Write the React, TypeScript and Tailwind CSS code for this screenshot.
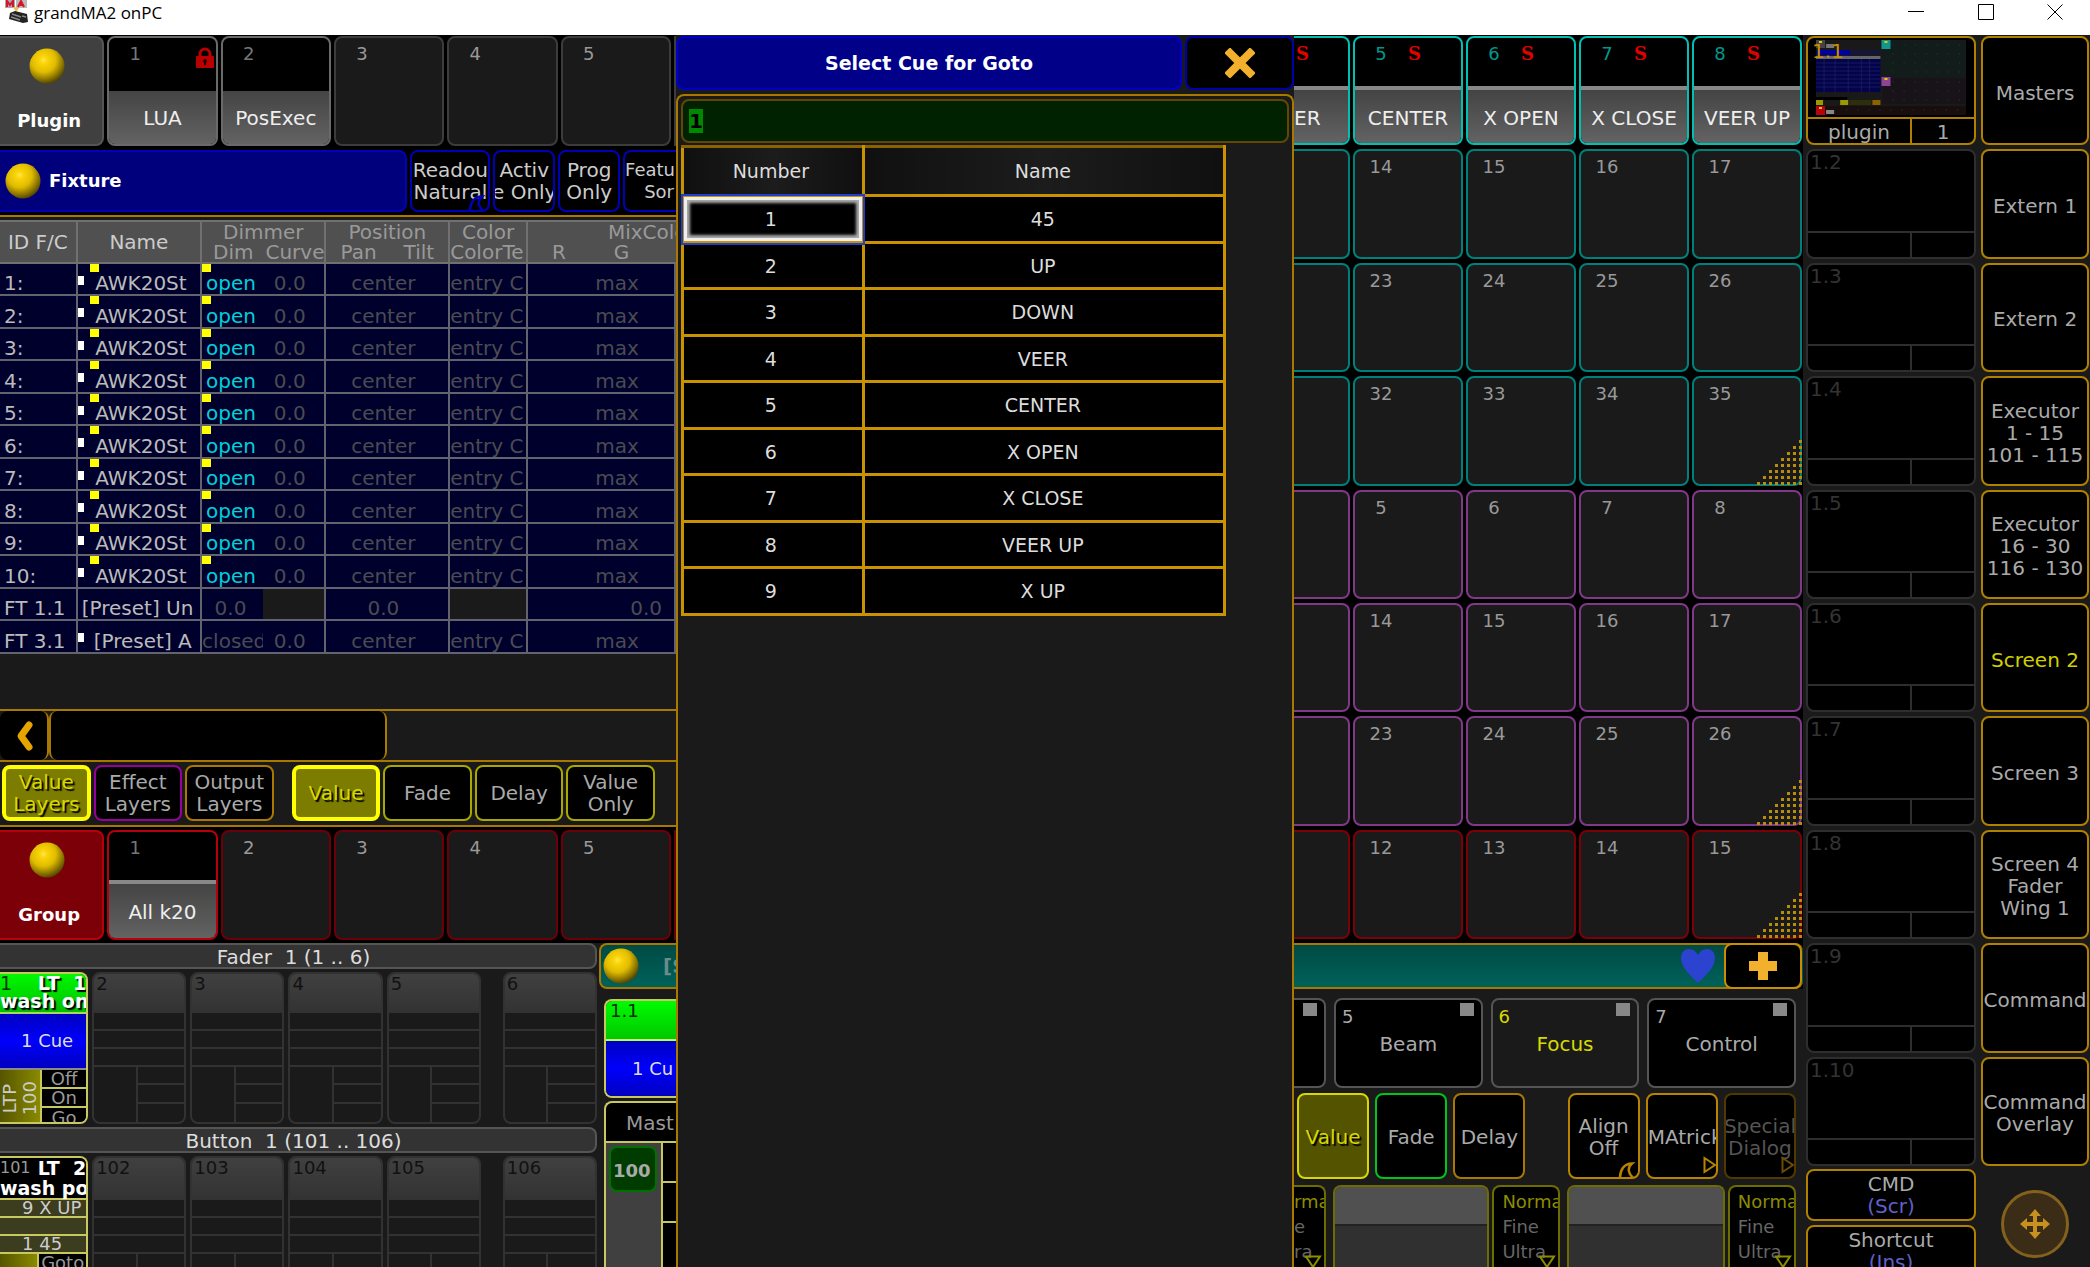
import { useEffect, useRef, type ReactNode } from "react";
import clsx from "clsx";

const fixtures = [1, 2, 3, 4, 5, 6, 7, 8, 9, 10];
const cues = ["45", "UP", "DOWN", "VEER", "CENTER", "X OPEN", "X CLOSE", "VEER UP", "X UP"];

const Ball = ({ id }: { id: string }) => (
  <svg viewBox="0 0 36 36" className="h-9 w-9 shrink-0" aria-hidden="true">
    <defs>
      <radialGradient id={id} cx="0.4" cy="0.33" r="0.7">
        <stop offset="0" stopColor="#ffe45c" />
        <stop offset="0.15" stopColor="#fbd508" />
        <stop offset="0.5" stopColor="#e0bc00" />
        <stop offset="0.8" stopColor="#8a7300" />
        <stop offset="1" stopColor="#4c4000" />
      </radialGradient>
    </defs>
    <circle cx="18" cy="18" r="17.5" fill={`url(#${id})`} />
  </svg>
);

const Lock = () => (
  <svg viewBox="0 0 18 22" className="absolute top-[9px] right-0.5 h-[22px] w-[18px]" aria-hidden="true">
    <path d="M4 11V7a5 5 0 0 1 10 0v4" fill="none" stroke="#b80000" strokeWidth="3" />
    <rect y="9" width="18" height="12" rx="1" fill="#b80000" />
    <path d="M9 12a2 2 0 0 1 1 3.6V18H8v-2.400A2 2 0 0 1 9 12" fill="#1a0000" />
  </svg>
);

/** Diagonal dotted corner that marks a scrollable pool */
const DotCorner = () => (
  <svg viewBox="0 0 47 48" className="absolute -right-[3px] -bottom-[3px] z-10 h-12 w-[47px]" aria-hidden="true">
    {Array.from({ length: 8 }, (_, r) =>
      Array.from({ length: r + 1 }, (_, c) => (
        <rect key={`${r}-${c}`} x={43 - c * 6} y={1 + r * 6} width="3" height="3" fill="#b98c0c" />
      ))
    )}
  </svg>
);

const Swirl = ({ color }: { color: string }) => (
  <svg viewBox="0 0 20 16" className="absolute right-0 -bottom-px h-4 w-5" aria-hidden="true">
    <path d="M2 16C2 8 6 1.500 14 1.500c-5 4-4 11 2 14.500" fill="none" stroke={color} strokeWidth="2.500" />
  </svg>
);

const Triangle = ({ color }: { color: string }) => (
  <svg viewBox="0 0 13 18" className="absolute right-0 bottom-[3px] h-[18px] w-[13px]" aria-hidden="true">
    <path d="M1.500 2v14L12 9z" fill="none" stroke={color} strokeWidth="2" />
  </svg>
);

type PoolTileProps = {
  no?: string;
  label?: string;
  tone: string;
  strip?: boolean;
  star?: boolean;
  numTone?: string;
  children?: ReactNode;
};

const PoolTile = ({ no, label, tone, strip, star, numTone = "text-[#999]", children }: PoolTileProps) => (
  <button className={clsx("relative flex min-w-0 flex-col rounded-lg border-2 text-left", label ? "bg-black" : "bg-[#1a1a1a]", tone)}>
    <span
      className={clsx(
        "flex w-full justify-between overflow-hidden pt-[5px] text-lg/[22px]",
        !label && "flex-1",
        label && (strip ? "h-12 shrink-0" : "h-[53px] shrink-0")
      )}
    >
      <span className={clsx("w-[52px] text-center", numTone)}>{no}</span>
      {star && <span className="w-1/2 font-['DejaVu_Serif',serif] font-bold text-[#e00000]">S</span>}
    </span>
    {label && (
      <span
        className={clsx(
          "flex w-full flex-1 items-center justify-center overflow-hidden rounded-b-md bg-linear-to-b from-[#444] to-[#636363] text-xl/[22px] whitespace-nowrap text-[#eee]",
          strip && "border-t-4 border-[#888] pt-0.5"
        )}
      >
        {label}
      </span>
    )}
    {children}
  </button>
);

const PluginRow = () => (
  <div className="grid h-[110px] grid-cols-[104fr_110fr_110fr_110fr_110fr_110fr_2fr] gap-[3px]">
    <button className="flex flex-col items-center justify-between rounded-r-lg border-2 border-l-0 border-[#555] bg-[#404040] pt-2.5 pr-2 pb-3 text-lg/[22px] font-bold text-white">
      <Ball id="ball-plugin" />
      <span className="pl-1">Plugin</span>
    </button>
    <PoolTile no="1" label="LUA" tone="border-[#6a6a6a]" numTone="text-[#777]">
      <Lock />
    </PoolTile>
    <PoolTile no="2" label="PosExec" tone="border-[#6a6a6a]" numTone="text-[#777]" />
    <PoolTile no="3" tone="border-[#3c3c3c]" />
    <PoolTile no="4" tone="border-[#3c3c3c]" />
    <PoolTile no="5" tone="border-[#3c3c3c]" />
    <span className="border-2 border-r-0 border-[#3c3c3c]" />
  </div>
);

const GroupRow = () => (
  <div className="grid h-[110px] grid-cols-[104fr_110fr_110fr_110fr_110fr_110fr_2fr] gap-[3px]">
    <button className="flex flex-col items-center justify-between rounded-r-lg border-2 border-l-0 border-[#b8000c] bg-[#7c0008] pt-2.5 pr-2 pb-3 text-lg/[22px] font-bold text-white">
      <Ball id="ball-group" />
      <span className="pl-1">Group</span>
    </button>
    <PoolTile no="1" label="All k20" strip tone="border-[#b8000c]" numTone="text-[#777]" />
    <PoolTile no="2" tone="border-[#6c0008]" />
    <PoolTile no="3" tone="border-[#6c0008]" />
    <PoolTile no="4" tone="border-[#6c0008]" />
    <PoolTile no="5" tone="border-[#6c0008]" />
    <span className="border-2 border-r-0 border-[#6c0008]" />
  </div>
);

const HeadButton = ({ lines, children }: { lines: string[]; children?: ReactNode }) => (
  <button className="relative flex min-w-0 flex-col items-center justify-center overflow-hidden rounded-lg border-2 border-[#0000b4] bg-black text-xl/[22px] whitespace-nowrap text-[#ccc]">
    {lines.map((l) => (
      <span key={l}>{l}</span>
    ))}
    {children}
  </button>
);

const FixtureBar = () => (
  <div className="mt-1 grid h-[62px] grid-cols-[408fr_80fr_62fr_62fr_53fr] gap-[3px]">
    <h2 className="flex items-center gap-2 rounded-r-lg border-2 border-l-0 border-[#0000b4] bg-[#00007c] pl-[5px] text-lg font-bold text-white">
      <Ball id="ball-fixture" />
      Fixture
    </h2>
    <HeadButton lines={["Readou", "Natural"]}>
      <Swirl color="#0000b4" />
    </HeadButton>
    <HeadButton lines={["Activ", "e Only"]} />
    <HeadButton lines={["Prog", "Only"]} />
    <button className="min-w-0 overflow-hidden rounded-l-lg border-2 border-r-0 border-[#0000b4] bg-black text-right text-lg/[22px] text-[#ccc]">
      <span className="block text-left">Featu</span>
      <span className="block pr-0.5">Sor</span>
    </button>
  </div>
);

const cell = "border-r-2 border-b-2 border-[#63636d] p-0 pt-2 overflow-hidden whitespace-nowrap";
const dim = "text-center text-[#4b4b52]";

const FixtureSheet = () => (
  <table className="mt-[3px] w-full table-fixed border-separate border-spacing-0 bg-[#00002c] text-xl/[22px] text-[#bbb]">
    <colgroup>
      <col className="w-[11.5%]" />
      <col className="w-[18.4%]" />
      <col className="w-[9%]" />
      <col className="w-[9.4%]" />
      <col className="w-[18.3%]" />
      <col className="w-[11.5%]" />
      <col />
    </colgroup>
    <thead className="bg-[#505050] text-[#999]">
      <tr className="h-[43px]">
        <th className="border-t-2 border-r-2 border-b-2 border-[#707070] p-0 font-normal text-[#ccc]">ID F/C</th>
        <th className="border-t-2 border-r-2 border-b-2 border-[#707070] p-0 font-normal text-[#ccc]">Name</th>
        <th colSpan={2} className="border-t-2 border-r-2 border-b-2 border-[#707070] p-0 font-normal leading-5">
          Dimmer
          <span className="flex justify-end gap-3">
            <span>Dim</span>
            <span>Curve</span>
          </span>
        </th>
        <th className="border-t-2 border-r-2 border-b-2 border-[#707070] p-0 font-normal leading-5">
          Position
          <span className="flex justify-between px-3.5">
            <span>Pan</span>
            <span>Tilt</span>
          </span>
        </th>
        <th className="overflow-hidden border-t-2 border-r-2 border-b-2 border-[#707070] p-0 font-normal leading-5">
          Color
          <span className="flex">ColorTe</span>
        </th>
        <th className="overflow-hidden border-t-2 border-b-2 border-[#707070] p-0 text-left font-normal leading-5 whitespace-nowrap">
          <span className="block pl-20">MixColo</span>
          <span className="flex gap-12 pl-6">
            <span>R</span>
            <span>G</span>
          </span>
        </th>
      </tr>
    </thead>
    <tbody>
      {fixtures.map((n) => (
        <tr key={n} className={n % 2 ? "h-8" : "h-[33px]"}>
          <td className={clsx(cell, "pl-1")}>{n}:</td>
          <td className={clsx(cell, "relative text-center")}>
            <span className="absolute top-0 left-3 h-2 w-[9px] bg-[#ff0]" />
            <span className="absolute top-3 left-0 h-[9px] w-1.5 bg-white" />
            <span className="pl-1">AWK20St</span>
          </td>
          <td className={clsx(cell, "relative border-r-0! pl-1 text-[#00d0d8]")}>
            <span className="absolute top-0 left-0 h-2 w-[9px] bg-[#ff0]" />
            open
          </td>
          <td className={clsx(cell, dim, "pr-2")}>0.0</td>
          <td className={clsx(cell, dim, "pr-2")}>center</td>
          <td className={clsx(cell, dim, "text-left")}>entry C</td>
          <td className={clsx(cell, dim, "pl-8")}>max</td>
        </tr>
      ))}
      <tr className="h-8">
        <td className={clsx(cell, "pl-1")}>FT 1.1</td>
        <td className={clsx(cell, "pl-1")}>[Preset] Un</td>
        <td className={clsx(cell, dim, "border-r-0! pr-1")}>0.0</td>
        <td className={clsx(cell, "bg-[#1a1a1a]")} />
        <td className={clsx(cell, dim, "pr-2")}>0.0</td>
        <td className={clsx(cell, "bg-[#1a1a1a]")} />
        <td className={clsx(cell, "pr-3 text-right text-[#4b4b52]")}>0.0</td>
      </tr>
      <tr className="h-[33px]">
        <td className={clsx(cell, "pl-1")}>FT 3.1</td>
        <td className={clsx(cell, "relative pl-4")}>
          <span className="absolute top-3 left-0 h-[9px] w-1.5 bg-white" />
          [Preset] A
        </td>
        <td className={clsx(cell, "border-r-0! text-[#4b4b52]")}>closed</td>
        <td className={clsx(cell, dim, "pr-2")}>0.0</td>
        <td className={clsx(cell, dim, "pr-2")}>center</td>
        <td className={clsx(cell, dim, "text-left")}>entry C</td>
        <td className={clsx(cell, dim, "pl-8")}>max</td>
      </tr>
    </tbody>
  </table>
);

const layerButtons = [
  { text: ["Value", "Layers"], tone: "border-[#ff0] border-4 bg-[#7c7c00] text-[#d8d800] [text-shadow:2px_2px_1px_#000]" },
  { text: ["Effect", "Layers"], tone: "border-2 border-[#98009c] bg-black text-[#aaa]" },
  { text: ["Output", "Layers"], tone: "border-2 border-[#a87800] bg-black text-[#aaa]" },
  null,
  { text: ["Value"], tone: "border-[#ff0] border-4 bg-[#7c7c00] text-[#d8d800] [text-shadow:2px_2px_1px_#000]" },
  { text: ["Fade"], tone: "border-2 border-[#a8a800] bg-black text-[#aaa]" },
  { text: ["Delay"], tone: "border-2 border-[#a8a800] bg-black text-[#aaa]" },
  { text: ["Value", "Only"], tone: "border-2 border-[#a8a800] bg-black text-[#aaa]" },
];

const LayerBar = () => (
  <div className="grid h-[65px] grid-cols-[88fr_88fr_88fr_12fr_88fr_88fr_88fr_88fr_18fr] gap-[3px] border-b-2 border-[#a87800] bg-[#1a1a1a] pt-[3px] pb-1 pl-0.5">
    {layerButtons.map((b, i) =>
      b ? (
        <button key={i} className={clsx("flex min-w-0 flex-col items-center justify-center rounded-lg text-xl/[22px]", b.tone)}>
          {b.text.map((t) => (
            <span key={t}>{t}</span>
          ))}
        </button>
      ) : (
        <span key={i} />
      )
    )}
  </div>
);

const EmptyExec = ({ no, tall }: { no: string; tall?: boolean }) => (
  <div className="flex min-w-0 flex-col overflow-hidden rounded-lg border-2 border-[#323232] bg-[#1a1a1a]">
    <span
      className={clsx(
        "shrink-0 border-b-2 border-[#323232] bg-linear-to-b from-[#404040] to-[#333] pl-0.5 text-lg/[20px] text-[#111]",
        tall ? "h-[42px]" : "h-[39px]"
      )}
    >
      {no}
    </span>
    <span className="h-[18px] shrink-0 border-b-2 border-[#323232]" />
    <span className="h-[18px] shrink-0 border-b-2 border-[#323232]" />
    <span className="h-[18px] shrink-0 border-b-2 border-[#323232]" />
    <span className="grid flex-1 grid-cols-[45fr_48fr]">
      <span className="border-r-2 border-[#323232]" />
      <span className="grid grid-rows-3 divide-y-2 divide-[#323232]">
        <span />
        <span />
        <span />
      </span>
    </span>
  </div>
);

const execGrid = "grid grid-cols-[88fr_94fr_94fr_94fr_94fr_14fr_94fr] gap-x-1";
const actionBtn = "border-b-2 border-[#c8c860] bg-black text-center text-lg/[17px] text-[#999] last:border-b-0";

const Executors = () => (
  <div className="flex min-w-0 flex-col bg-[#1a1a1a]">
    <h3 className="h-[26px] rounded-r-lg border-2 border-l-0 border-[#555] bg-[#333] pr-2 text-center text-xl/[24px] whitespace-pre text-[#ddd]">
      Fader  1 (1 .. 6)
    </h3>
    <div className={clsx(execGrid, "mt-[3px] h-[152px]")}>
      <div className="flex min-w-0 flex-col overflow-hidden rounded-r-lg border-2 border-l-0 border-[#c8c860]">
        <div className="relative h-10 shrink-0 border-b-2 border-[#a8d860] bg-linear-to-b from-[#00f800] to-[#00c000] text-right text-[19px]/[18px] font-bold whitespace-pre text-white [text-shadow:2px_2px_1px_#000]">
          <span className="absolute top-0 left-0 font-normal text-[#063806] [text-shadow:none]">1</span>
          LT  1{"\n"}wash on
        </div>
        <div className="flex h-14 shrink-0 items-center justify-center border-b-2 border-[#8a8a8a] bg-linear-to-b from-[#0000c0] via-[#0000fc] to-[#0000c0] pl-2 text-lg text-[#ddd]">
          1 Cue
        </div>
        <div className="grid flex-1 grid-cols-[40fr_48fr]">
          <div className="flex items-center justify-center border-r-2 border-[#c8c860] bg-linear-to-r from-[#555500] to-[#8a8a00]">
            <span className="rotate-180 text-center text-lg/[20px] text-[#ccc] [writing-mode:vertical-rl]">
              LTP
              <br />
              100
            </span>
          </div>
          <div className="grid grid-rows-3">
            <button className={actionBtn}>Off</button>
            <button className={actionBtn}>On</button>
            <button className={actionBtn}>Go</button>
          </div>
        </div>
      </div>
      <EmptyExec no="2" />
      <EmptyExec no="3" />
      <EmptyExec no="4" />
      <EmptyExec no="5" />
      <span />
      <EmptyExec no="6" />
    </div>
    <h3 className="mt-[3px] h-[26px] rounded-r-lg border-2 border-l-0 border-[#555] bg-[#333] pr-2 text-center text-xl/[24px] whitespace-pre text-[#ddd]">
      Button  1 (101 .. 106)
    </h3>
    <div className={clsx(execGrid, "mt-[3px] h-[152px] shrink-0")}>
      <div className="flex min-w-0 flex-col overflow-hidden rounded-r-lg border-2 border-l-0 border-[#c8c860]">
        <div className="relative h-10 shrink-0 bg-black text-[19px]/[20px] font-bold whitespace-pre text-white">
          <span className="absolute top-0 left-0 text-base/[20px] font-normal text-[#999]">101</span>
          <span className="block text-right">LT  2</span>wash pos
        </div>
        <span className="h-5 shrink-0 border-y-2 border-[#c8c860] bg-[#3c3c1e] pl-[22px] text-lg/[16px] whitespace-nowrap text-[#ccc]">9 X UP</span>
        <span className="h-[18px] shrink-0 border-b-2 border-[#c8c860] bg-[#3c3c1e]" />
        <span className="h-[18px] shrink-0 border-b-2 border-[#c8c860] bg-[#3c3c1e] pl-[22px] text-lg/[16px] text-[#ccc]">1 45</span>
        <div className="grid flex-1 grid-cols-[40fr_48fr]">
          <span className="border-r-2 border-[#c8c860] bg-linear-to-r from-[#555500] to-[#8a8a00]" />
          <button className="overflow-hidden bg-black text-center text-lg/[17px] text-[#999]">
            <span className="block h-14">Goto</span>
          </button>
        </div>
      </div>
      <EmptyExec no="102" tall />
      <EmptyExec no="103" tall />
      <EmptyExec no="104" tall />
      <EmptyExec no="105" tall />
      <span />
      <EmptyExec no="106" tall />
    </div>
  </div>
);

const SpecialMaster = () => (
  <div className="flex min-w-0 flex-col overflow-hidden bg-[#1a1a1a] whitespace-nowrap">
    <div className="flex h-[46px] shrink-0 items-center gap-6 rounded-l-lg border-2 border-r-0 border-[#a87800] bg-linear-to-b from-[#004a44] to-[#00625a] pl-0.5 text-xl font-bold text-[#6c8c8a]">
      <Ball id="ball-master" />
      [S
    </div>
    <div className="mt-2.5 ml-[5px] flex h-[99px] shrink-0 flex-col overflow-hidden rounded-l-lg border-2 border-r-0 border-[#c8c860]">
      <span className="h-10 border-b-2 border-[#c8f860] bg-linear-to-b from-[#00fc00] to-[#00c800] pl-1 text-lg/[20px] text-[#042c04]">1.1</span>
      <span className="flex flex-1 items-center bg-linear-to-b from-[#0000c0] via-[#0000fc] to-[#0000c0] pl-[26px] text-lg text-[#ddd]">1 Cu</span>
    </div>
    <div className="mt-[3px] ml-[5px] flex flex-1 flex-col overflow-hidden rounded-l-lg border-2 border-r-0 border-[#c8c860] bg-black">
      <span className="h-10 shrink-0 border-b-2 border-[#c8c860] pl-5 text-xl/[40px] text-[#999]">Mast</span>
      <div className="grid flex-1 grid-cols-[57fr_13fr]">
        <div className="border-r-2 border-[#c8c860] bg-[#404040] p-[3px] pr-1">
          <div className="h-[46px] rounded-lg border-2 border-[#007000] bg-[#003c00] pl-0.5 text-lg/[46px] font-bold text-[#aaa]">100</div>
        </div>
        <div>
          <div className="h-10 border-b-2 border-[#c8c860]" />
          <div className="h-10 border-b-2 border-[#c8c860]" />
        </div>
      </div>
    </div>
  </div>
);

const LeftPane = () => (
  <section className="flex min-w-0 flex-col overflow-hidden pt-px">
    <PluginRow />
    <FixtureBar />
    <div className="mt-[3px] flex flex-col border-t-2 border-[#a87800] bg-[#1a1a1a]">
      <FixtureSheet />
      <div className="mt-[55px] flex h-[53px] border-y-2 border-[#a87800]">
        <button aria-label="Back" className="flex w-[49px] items-center justify-center rounded-lg border-r-2 border-[#a87800] bg-black">
          <svg viewBox="0 0 20 32" className="h-8 w-5" aria-hidden="true">
            <path d="M15 5 7 16l8 11" fill="none" stroke="#e6a400" strokeWidth="7" strokeLinecap="round" strokeLinejoin="round" />
          </svg>
        </button>
        <span className="w-1/2 rounded-lg border-x-2 border-[#a87800] bg-black" />
      </div>
      <LayerBar />
    </div>
    <div className="mt-[3px]">
      <GroupRow />
    </div>
    <div className="mt-[3px] grid min-h-0 flex-1 grid-cols-[597fr_77fr] gap-0.5 bg-[#1a1a1a]">
      <Executors />
      <SpecialMaster />
    </div>
  </section>
);

const GotoDialog = () => {
  const input = useRef<HTMLInputElement>(null);

  useEffect(() => {
    input.current?.focus();
    input.current?.select();
  }, []);

  return (
    <section role="dialog" aria-label="Select Cue for Goto" className="flex min-w-0 flex-col bg-[#1a1a1a] pt-px text-[19px]/[24px] text-[#ddd]">
      <div className="grid h-[54px] grid-cols-[506fr_109fr] gap-[3px]">
        <h1 className="flex items-center justify-center rounded-lg border-2 border-[#0000c4] bg-[#000088] font-bold text-white">Select Cue for Goto</h1>
        <button aria-label="Close" className="flex items-center justify-center rounded-lg border-2 border-[#0000a8] bg-black">
          <svg viewBox="0 0 30 30" className="h-[30px] w-[30px]" aria-hidden="true">
            <path d="M5 5l20 20M25 5 5 25" fill="none" stroke="#f2b02c" strokeWidth="8" strokeLinecap="square" />
          </svg>
        </button>
      </div>
      <div className="mt-1 flex min-h-0 flex-1 flex-col rounded-t-lg border-2 border-b-0 border-[#a87800] px-[3px] pt-[3px]">
        <input
          ref={input}
          aria-label="Cue number"
          defaultValue="1"
          className="h-11 rounded-lg border-2 border-[#644600] bg-[#002200] px-1.5 text-xl/[30px] font-bold text-[#ddd] outline-none selection:bg-[#008800] selection:text-black"
        />
        <table className="mt-0.5 w-[545px] max-w-full table-fixed border-collapse bg-black">
          <colgroup>
            <col className="w-1/3" />
            <col />
          </colgroup>
          <thead>
            <tr className="h-[49px] bg-[#1a1a1a]">
              <th className="border-[3px] border-t-[#8a6200] border-[#c89200] bg-linear-to-r from-[#101010] via-[#1c1c1c] to-[#101010] p-0 pr-1 font-normal">
                Number
              </th>
              <th className="border-[3px] border-t-[#8a6200] border-[#c89200] bg-linear-to-r from-[#101010] via-[#1c1c1c] to-[#101010] p-0 pr-0.5 font-normal">
                Name
              </th>
            </tr>
          </thead>
          <tbody>
            {cues.map((name, i) => (
              <tr key={name} className={i % 2 ? "h-[46px]" : "h-[47px]"}>
                <td
                  className={clsx(
                    "border-[3px] border-[#c89200] p-0 pr-1 text-center",
                    i === 0 && "outline-2 outline-[#2040c8] shadow-[inset_0_0_0_3px_#eee,inset_0_0_3px_6px_#aaa]"
                  )}
                >
                  {i + 1}
                </td>
                <td className="border-[3px] border-[#c89200] p-0 pr-0.5 text-center">{name}</td>
              </tr>
            ))}
          </tbody>
        </table>
      </div>
    </section>
  );
};

const activePresets = [
  ["5", "CENTER"],
  ["6", "X OPEN"],
  ["7", "X CLOSE"],
  ["8", "VEER UP"],
];

const poolRows = [
  { nos: ["14", "15", "16", "17"], tone: "border-[#00807a]", dots: false },
  { nos: ["23", "24", "25", "26"], tone: "border-[#00807a]", dots: false },
  { nos: ["32", "33", "34", "35"], tone: "border-[#00807a]", dots: true },
  { nos: ["5", "6", "7", "8"], tone: "border-[#803888]", dots: false },
  { nos: ["14", "15", "16", "17"], tone: "border-[#803888]", dots: false },
  { nos: ["23", "24", "25", "26"], tone: "border-[#803888]", dots: true },
  { nos: ["12", "13", "14", "15"], tone: "border-[#7c0008]", dots: true },
];

const poolCols = "grid grid-cols-[56fr_110fr_110fr_110fr_110fr] gap-[3px] pr-px";

const Pools = () => (
  <div className="grid h-[903px] shrink-0 grid-rows-8 gap-1">
    <div className={poolCols}>
      <div className="flex min-w-0 flex-col overflow-hidden rounded-r-lg border-2 border-l-0 border-[#00c0b4] bg-black">
        <span className="h-12 shrink-0 pt-[5px] pl-0.5 font-['DejaVu_Serif',serif] text-lg/[22px] font-bold text-[#e00000]">S</span>
        <span className="flex flex-1 items-center border-t-4 border-[#888] bg-linear-to-b from-[#444] to-[#636363] pt-0.5 text-xl/[22px] text-[#eee]">ER</span>
      </div>
      {activePresets.map(([no, label]) => (
        <PoolTile key={no} no={no} label={label} strip star tone="border-[#00c0b4]" numTone="text-[#00988e]" />
      ))}
    </div>
    {poolRows.map((row, r) => (
      <div key={r} className={poolCols}>
        <span className={clsx("rounded-r-lg border-2 border-l-0 bg-[#1a1a1a]", row.tone)} />
        {row.nos.map((no, i) => (
          <PoolTile key={no} no={no} tone={row.tone}>
            {row.dots && i === 3 && <DotCorner />}
          </PoolTile>
        ))}
      </div>
    ))}
  </div>
);

const FeatureTile = ({ no, label, active }: { no: string; label: string; active?: boolean }) => (
  <button
    className={clsx(
      "relative min-w-0 rounded-lg border-2 border-[#555] pt-0.5 text-xl/[22px]",
      active ? "bg-[#1a1a1a] text-[#d8d800]" : "bg-black text-[#aaa]"
    )}
  >
    <span className="absolute top-1.5 left-1.5 text-lg/[22px]">{no}</span>
    <span className="absolute top-[3px] right-[7px] h-[13px] w-3.5 bg-[#888]" />
    {label}
  </button>
);

const CtrlButton = ({ lines, tone, children }: { lines: string[]; tone: string; children?: ReactNode }) => (
  <button className={clsx("relative flex min-w-0 flex-col justify-center overflow-hidden rounded-lg border-2 pt-0.5 text-xl/[22px] whitespace-nowrap", tone)}>
    {lines.map((l) => (
      <span key={l}>{l}</span>
    ))}
    {children}
  </button>
);

const EncoderMode = ({ partial }: { partial?: boolean }) => (
  <button
    className={clsx(
      "relative flex min-w-0 flex-col overflow-hidden border-2 border-b-0 border-[#6c6c00] bg-black pt-0.5 text-left text-lg/[25px] text-[#666]",
      partial ? "rounded-tr-lg border-l-0" : "rounded-t-lg pl-2"
    )}
  >
    <span className="text-[#8c8c00]">{partial ? "rma" : "Norma"}</span>
    <span>{partial ? "e" : "Fine"}</span>
    <span>{partial ? "ra" : "Ultra"}</span>
    <svg viewBox="0 0 18 12" className="absolute right-0.5 bottom-0 h-3 w-[18px]" aria-hidden="true">
      <path d="M2 1.500h14L9 12z" fill="none" stroke="#8c8c00" strokeWidth="2" />
    </svg>
  </button>
);

const EncoderBar = () => (
  <div className="flex min-h-0 flex-1 flex-col bg-[#1a1a1a] pr-[7px]">
    <div className="grid h-[90px] shrink-0 grid-cols-[32fr_149fr_149fr_149fr] gap-2">
      <button aria-label="Color" className="relative rounded-r-lg border-2 border-l-0 border-[#555] bg-black">
        <span className="absolute top-[3px] right-[7px] h-[13px] w-3.5 bg-[#888]" />
      </button>
      <FeatureTile no="5" label="Beam" />
      <FeatureTile no="6" label="Focus" active />
      <FeatureTile no="7" label="Control" />
    </div>
    <div className="mt-[5px] grid h-[86px] shrink-0 grid-cols-[72fr_72fr_72fr_30fr_72fr_72fr_72fr] gap-1.5 pl-[3px]">
      <CtrlButton lines={["Value"]} tone="items-center border-[#d8d800] bg-[#545400] text-[#d8d800] [text-shadow:2px_2px_1px_#000]" />
      <CtrlButton lines={["Fade"]} tone="items-center border-[#00c418] bg-black text-[#aaa]" />
      <CtrlButton lines={["Delay"]} tone="items-center border-[#a87800] bg-black text-[#aaa]" />
      <span />
      <CtrlButton lines={["Align", "Off"]} tone="items-center border-[#b88400] bg-black text-[#aaa]">
        <Swirl color="#b88400" />
      </CtrlButton>
      <CtrlButton lines={["MAtricks"]} tone="items-start border-[#b88400] bg-black text-[#aaa]">
        <Triangle color="#b88400" />
      </CtrlButton>
      <CtrlButton lines={["Special", "Dialog"]} tone="items-center border-[#503800] bg-black text-[#555]">
        <Triangle color="#6c4c00" />
      </CtrlButton>
    </div>
    <div className="mt-1.5 grid min-h-0 flex-1 grid-cols-[32fr_166fr_67fr_168fr_68fr]">
      <EncoderMode partial />
      {[0, 1].map((k) => (
        <div key={k} className="contents">
          <div className="mr-[3px] ml-[7px] rounded-t-lg border-2 border-b-0 border-[#6c6c00] bg-[#303030]">
            <div className="h-[39px] rounded-t-md border-b-2 border-[#222] bg-[#505050]" />
          </div>
          <EncoderMode />
        </div>
      ))}
    </div>
  </div>
);

const CenterPane = () => (
  <section className="flex min-w-0 flex-col overflow-hidden bg-black pt-px">
    <Pools />
    <div className="mt-1 flex h-[46px] shrink-0 items-stretch rounded-r-lg border-y-2 border-[#a87800] bg-linear-to-b from-[#004a44] to-[#00625a]">
      <div className="flex flex-1 items-center justify-end pr-2">
        <svg viewBox="0 0 36 36" className="h-9 w-9" aria-label="Favourite">
          <path d="M18 35C12 29 1 20 1 10 1 4 5 1 9 1c4 0 7 2 9 6 2-4 5-6 9-6 4 0 8 3 8 9 0 10-11 19-17 25z" fill="#2b43cf" />
        </svg>
      </div>
      <button aria-label="Add" className="-my-0.5 mr-px flex w-[78px] items-center justify-center rounded-lg border-2 border-[#c89000] bg-black">
        <svg viewBox="0 0 30 30" className="h-[30px] w-[30px]" aria-hidden="true">
          <path d="M10 1h10v9h9v10h-9v9H10v-9H1V10h9z" fill="#f2b02c" />
        </svg>
      </button>
    </div>
    <div className="h-[9px] shrink-0 bg-[#1a1a1a]" />
    <EncoderBar />
  </section>
);

const Thumbnail = () => (
  <svg viewBox="0 0 149 75" preserveAspectRatio="none" className="h-[75px] w-full" aria-hidden="true">
    <rect width="149" height="75" fill="#191919" />
    <rect x="66" y="1" width="83" height="36" fill="#121d1b" />
    <rect x="66" y="38" width="83" height="26" fill="#181319" />
    <rect y="66" width="149" height="9" fill="#190e0e" />
    <g stroke="#2c3a37" strokeWidth="1" strokeDasharray="1 10">
      <path d="M76 5h70M76 14h70M76 23h70M76 32h70M76 42h70M76 51h70M76 60h70M30 70h116" />
    </g>
    <rect width="9" height="8" fill="#444" />
    <rect x="10" y="4" width="8" height="4" fill="#777" />
    <rect y="10" width="34" height="5" fill="#0000a0" />
    <rect x="34" y="10" width="30" height="5" fill="#151538" />
    <rect y="16" width="64" height="3" fill="#666" />
    <rect y="19" width="64" height="33" fill="#03034a" />
    <path d="M0 23h64M0 27h64M0 31h64M0 35h64M0 39h64M0 43h64M0 47h64M8 19v33M19 19v33M32 19v33M45 19v33M53 19v33" stroke="#24246a" strokeWidth="0.6" />
    <rect y="57" width="31" height="3" fill="#000" />
    <rect y="60" width="7" height="5" fill="#9a9a00" />
    <rect x="24" y="60" width="8" height="5" fill="#9a9a00" />
    <rect x="33" y="60" width="22" height="5" fill="#2e2e0a" />
    <rect x="56" y="60" width="8" height="5" fill="#8a6200" />
    <rect y="66" width="9" height="9" fill="#b80010" />
    <rect x="10" y="70" width="8" height="4" fill="#888" />
    <rect x="65" width="9" height="9" fill="#109890" />
    <rect x="65" y="37" width="9" height="9" fill="#8c4494" />
    <path d="M3 2h3M68 2h3M68 39h3M3 68h3" stroke="#e8c800" strokeWidth="2" />
  </svg>
);

const ViewBar = () => (
  <nav aria-label="Views" className="flex min-w-0 flex-col overflow-hidden bg-[#1a1a1a] px-[3px] pt-px text-xl/[22px] text-[#aaa]">
    <div className="grid h-[1130px] shrink-0 grid-rows-10 gap-1">
      <button className="relative flex flex-col overflow-hidden rounded-lg border-2 border-[#b08000] bg-black">
        <span className="absolute top-0.5 left-1 z-10 text-[#c89000]">1.1</span>
        <span className="w-full flex-1 px-2 pt-0.5">
          <Thumbnail />
        </span>
        <span className="grid h-[26px] w-full shrink-0 grid-cols-[104fr_62fr] border-t-2 border-[#b08000] leading-[26px]">
          <span className="border-r-2 border-[#b08000]">plugin</span>
          <span>1</span>
        </span>
      </button>
      {[2, 3, 4, 5, 6, 7, 8, 9, 10].map((n) => (
        <button key={n} className="flex flex-col justify-between rounded-lg border-2 border-[#2e2e2e] bg-black text-left text-[#333]">
          <span className="pl-0.5">1.{n}</span>
          <span className="grid h-[26px] w-full grid-cols-[104fr_62fr] border-t-2 border-[#2e2e2e]">
            <span className="border-r-2 border-[#2e2e2e]" />
          </span>
        </button>
      ))}
    </div>
    <button className="mt-[3px] flex h-[52px] shrink-0 flex-col items-center justify-center rounded-lg border-2 border-[#b08000] bg-black">
      <span>CMD</span>
      <span className="text-[#6060c8]">(Scr)</span>
    </button>
    <button className="mt-1 flex h-[52px] shrink-0 flex-col items-center justify-center rounded-lg border-2 border-[#b08000] bg-black">
      <span>Shortcut</span>
      <span className="text-[#6060c8]">(Ins)</span>
    </button>
  </nav>
);

const screens = [
  ["Masters"],
  ["Extern 1"],
  ["Extern 2"],
  ["Executor", "1 - 15", "101 - 115"],
  ["Executor", "16 - 30", "116 - 130"],
  ["Screen 2"],
  ["Screen 3"],
  ["Screen 4", "Fader", "Wing 1"],
  ["Command"],
  ["Command", "Overlay"],
];

const ScreenBar = () => (
  <nav aria-label="Screens" className="flex min-w-0 flex-col bg-[#1a1a1a] pt-px pr-px pl-0.5">
    <div className="grid h-[1130px] shrink-0 grid-rows-10 gap-1">
      {screens.map((lines) => (
        <button
          key={lines.join(" ")}
          className={clsx(
            "flex min-w-0 flex-col items-center justify-center rounded-lg border-2 border-[#b08000] bg-black pt-1 text-xl/[22px] whitespace-nowrap",
            lines[0] === "Screen 2" ? "text-[#d0d000]" : "text-[#aaa]"
          )}
        >
          {lines.map((l) => (
            <span key={l}>{l}</span>
          ))}
        </button>
      ))}
    </div>
    <button aria-label="Move" className="mx-auto mt-6 flex h-[68px] w-[68px] items-center justify-center rounded-full border-[3px] border-[#84611c] bg-[#3a2c16]">
      <svg viewBox="0 0 30 30" className="h-[30px] w-[30px]" fill="#c89020" aria-hidden="true">
        <path d="M15 0l6 7h-4v6h6V9l7 6-7 6v-4h-6v6h4l-6 7-6-7h4v-6H7v4l-7-6 7-6v4h6V7H9z" />
      </svg>
    </button>
  </nav>
);

const TitleBar = () => (
  <header className="flex h-[35px] shrink-0 items-start bg-white text-black">
    <svg viewBox="0 0 24 24" className="ml-[5px] h-6 w-6" aria-hidden="true">
      <rect width="10" height="8" fill="#aaa" />
      <rect x="11" width="11" height="8" fill="#bbb" />
      <path d="M2 7V1l3 4 3-4v6M13 7l3-6 3 6M14 5h4" fill="none" stroke="#d8142c" strokeWidth="2" />
      <path d="M8 7l3 5 3-4z" fill="#f0c040" />
      <path d="M5 13l5-2 12 3 1 8-5 1L4 19z" fill="#222" />
      <path d="M7 14l9 3M6 17l9 3M17 16l4 1" stroke="#888" strokeWidth="1.500" />
    </svg>
    <span className="ml-[5px] pt-px font-['Open_Sans',sans-serif] text-[17px]/[24px]">grandMA2 onPC</span>
    <div className="ml-auto flex">
      <button aria-label="Minimize" className="flex h-6 w-[70px] items-center justify-center">
        <svg viewBox="0 0 16 16" className="h-4 w-4" stroke="#000">
          <path d="M0 7.500h16" />
        </svg>
      </button>
      <button aria-label="Maximize" className="flex h-6 w-[69px] items-center justify-center">
        <svg viewBox="0 0 16 16" className="h-4 w-4" stroke="#000" fill="none">
          <path d="M.5.5h15v15H.5z" />
        </svg>
      </button>
      <button aria-label="Close window" className="flex h-6 w-[70px] items-center justify-center">
        <svg viewBox="0 0 16 16" className="h-4 w-4" stroke="#000">
          <path d="M.5.5l15 15M15.500.5l-15 15" />
        </svg>
      </button>
    </div>
  </header>
);

export default function App() {
  return (
    <div className="flex h-screen flex-col overflow-hidden bg-black font-['DejaVu_Sans',sans-serif]">
      <TitleBar />
      <main className="grid min-h-0 flex-1 grid-cols-[676fr_618fr_509fr_176fr_111fr]">
        <LeftPane />
        <GotoDialog />
        <CenterPane />
        <ViewBar />
        <ScreenBar />
      </main>
    </div>
  );
}
